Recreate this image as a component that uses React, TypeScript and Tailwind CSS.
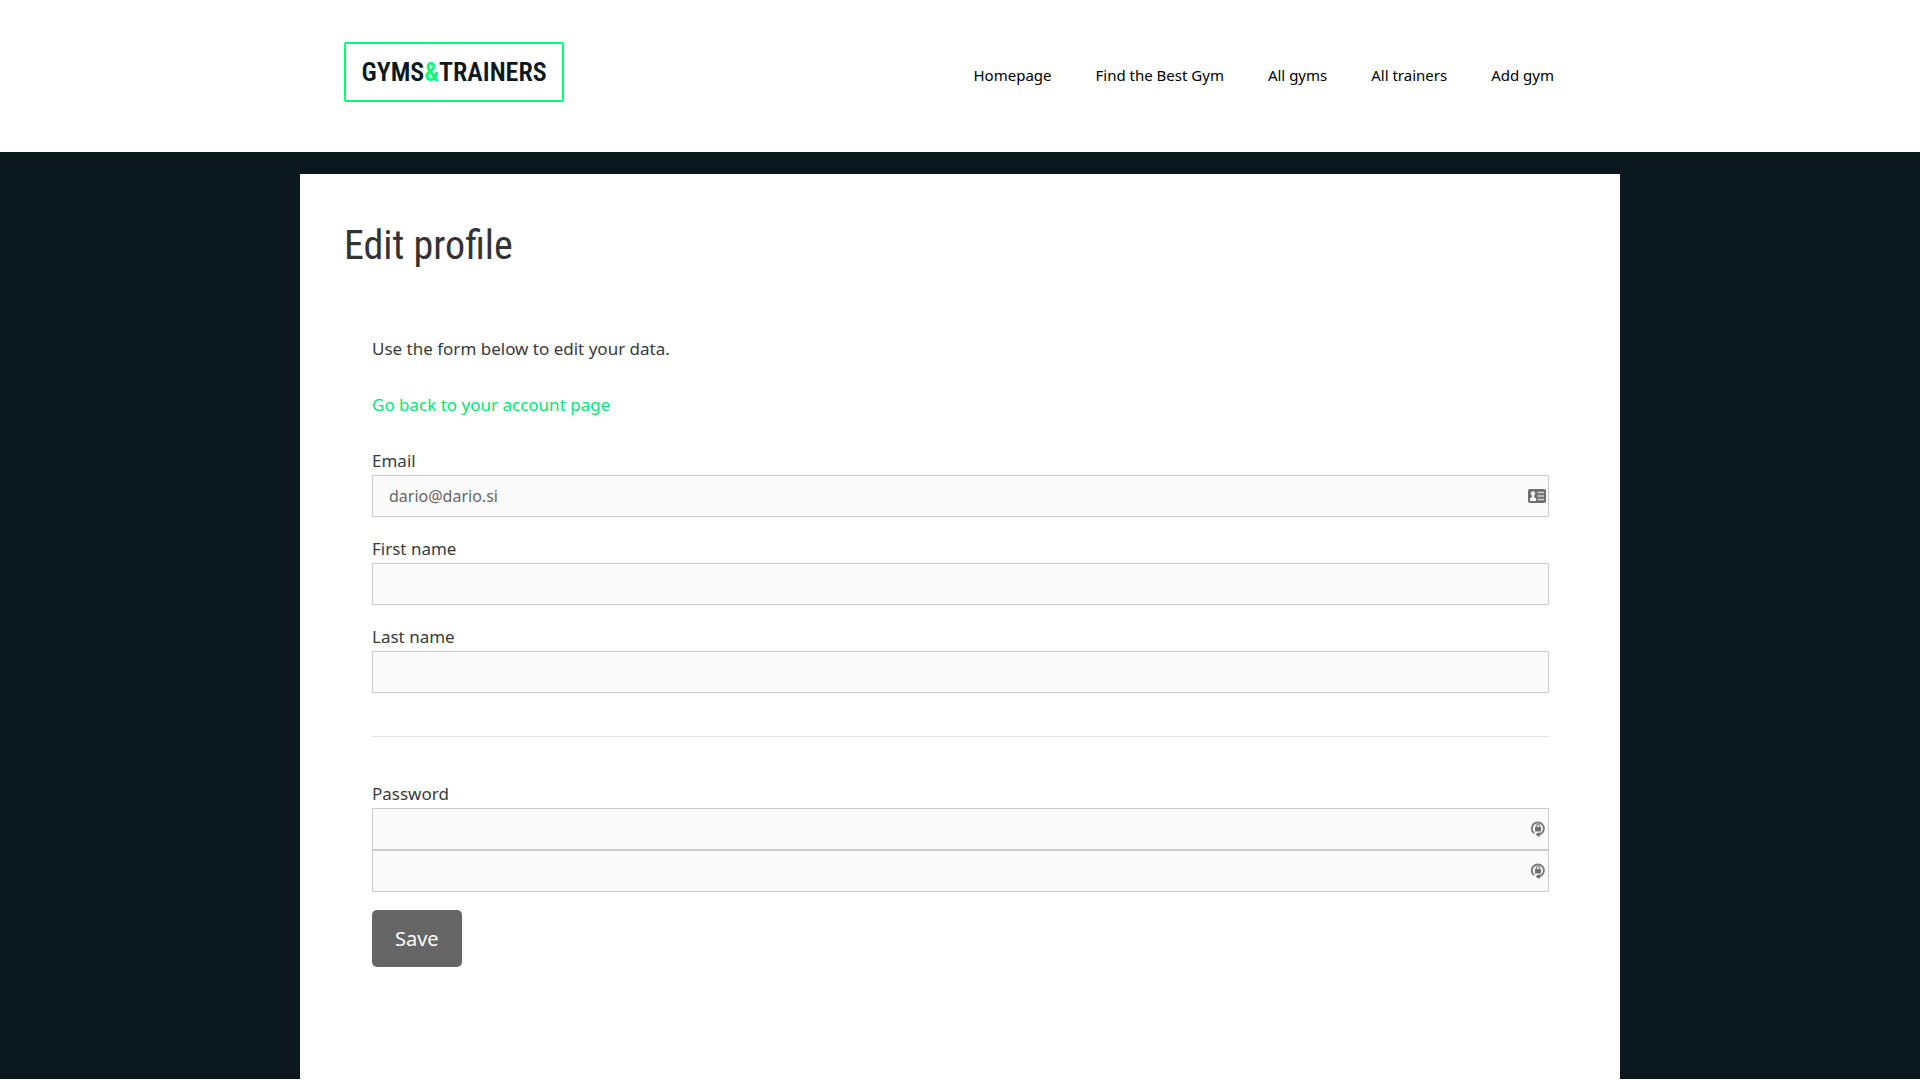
import type { InputHTMLAttributes, ReactNode } from 'react'

const NAV_LINKS = ['Homepage', 'Find the Best Gym', 'All gyms', 'All trainers', 'Add gym']

function Logo() {
  return (
    <a
      href="#"
      className="flex h-[60px] w-[220px] items-center justify-center rounded-[2px] border-2 border-[#00ff7b] font-['Roboto_Condensed',sans-serif] text-[26px] leading-[56px] font-semibold text-[#0b181d]"
    >
      GYMS<span className="text-[#00ff7b]">&amp;</span>TRAINERS
    </a>
  )
}

function CardIcon() {
  return (
    <svg viewBox="0 0 18 14" className="h-[14px] w-[18px]" aria-hidden="true">
      <rect width="18" height="14" rx="2" fill="#6f6f6f" />
      <circle cx="5" cy="4.4" r="2.2" fill="#fafafa" />
      <path d="M4 6h2v2l2 1.200v2.800H2V9.200L4 8z" fill="#fafafa" />
      <path d="M9.500 3.500h6.500M9.500 7h6.500M9.500 10.500h6.500" stroke="#d0d0d0" strokeWidth="1.600" />
    </svg>
  )
}

function LockIcon() {
  return (
    <svg viewBox="0 0 14 16" className="mr-px h-4 w-[14px]" aria-hidden="true">
      <path d="M3.200 12.200A6 6 0 1 1 10.500 12.200Q9.500 13.200 7.500 13.500" fill="none" stroke="#7d7d7d" strokeWidth="2" />
      <path d="M8.500 11v5L4.500 13.500z" fill="#666666" />
      <rect x="4" y="6" width="6" height="4.400" rx="0.500" fill="#707070" />
      <path d="M5.300 6.400V5.300a1.700 1.700 0 0 1 3.400 0v1.100" fill="none" stroke="#858585" strokeWidth="1.200" />
    </svg>
  )
}

type TextInputProps = InputHTMLAttributes<HTMLInputElement> & { icon?: ReactNode }

function TextInput({ icon, ...props }: TextInputProps) {
  return (
    <div className="relative">
      <input
        {...props}
        className="block h-[42px] w-full border border-[#cccccc] bg-[#fafafa] px-4 text-base text-[#666666] outline-none"
      />
      {icon && (
        <span className="pointer-events-none absolute inset-y-0 right-0 flex items-center pr-[3px]">{icon}</span>
      )}
    </div>
  )
}

export default function App() {
  return (
    <div className="flex min-h-screen flex-col bg-white pb-px font-['Noto_Sans',sans-serif] text-[17px] leading-7 text-[#3a3a3a]">
      {/* Header */}
      <header className="bg-white">
        <div className="mx-auto flex h-[152px] max-w-[1320px] items-center justify-between px-11">
          <div className="pb-2">
            <Logo />
          </div>
          <nav className="flex gap-11 pr-[22px] pb-0.5 text-[15px] text-black">
            {NAV_LINKS.map((label) => (
              <a key={label} href="#">
                {label}
              </a>
            ))}
          </nav>
        </div>
      </header>

      {/* Content */}
      <main className="flex grow flex-col bg-[#0b181d] pt-[22px]">
        <div className="mx-auto w-full max-w-[1320px] grow bg-white px-11 pt-[45px]">
          <h1 className="font-['Roboto_Condensed',sans-serif] text-[40px] leading-[54px] text-[#333333]">
            Edit profile
          </h1>

          <div className="pt-[62px] pr-[27px] pb-24 pl-7">
            <p className="mb-7">Use the form below to edit your data.</p>
            <p className="mb-7">
              <a href="#" className="text-[#00e676]">
                Go back to your account page
              </a>
            </p>

            <form onSubmit={(e) => e.preventDefault()}>
              <div className="flex flex-col gap-[18px]">
                <div>
                  <label htmlFor="email" className="block">Email</label>
                  <TextInput id="email" type="email" defaultValue="dario@dario.si" icon={<CardIcon />} />
                </div>
                <div>
                  <label htmlFor="first-name" className="block">First name</label>
                  <TextInput id="first-name" type="text" />
                </div>
                <div>
                  <label htmlFor="last-name" className="block">Last name</label>
                  <TextInput id="last-name" type="text" />
                </div>
              </div>

              <hr className="my-[43px] border-[#e5e5e5]" />

              <label htmlFor="password" className="block">Password</label>
              <TextInput id="password" type="password" icon={<LockIcon />} />
              <TextInput type="password" aria-label="Repeat password" icon={<LockIcon />} />

              <button
                type="submit"
                className="mt-[18px] h-[57px] rounded-[5px] bg-[#666666] px-[23px] text-xl text-white"
              >
                Save
              </button>
            </form>
          </div>
        </div>
      </main>
    </div>
  )
}
